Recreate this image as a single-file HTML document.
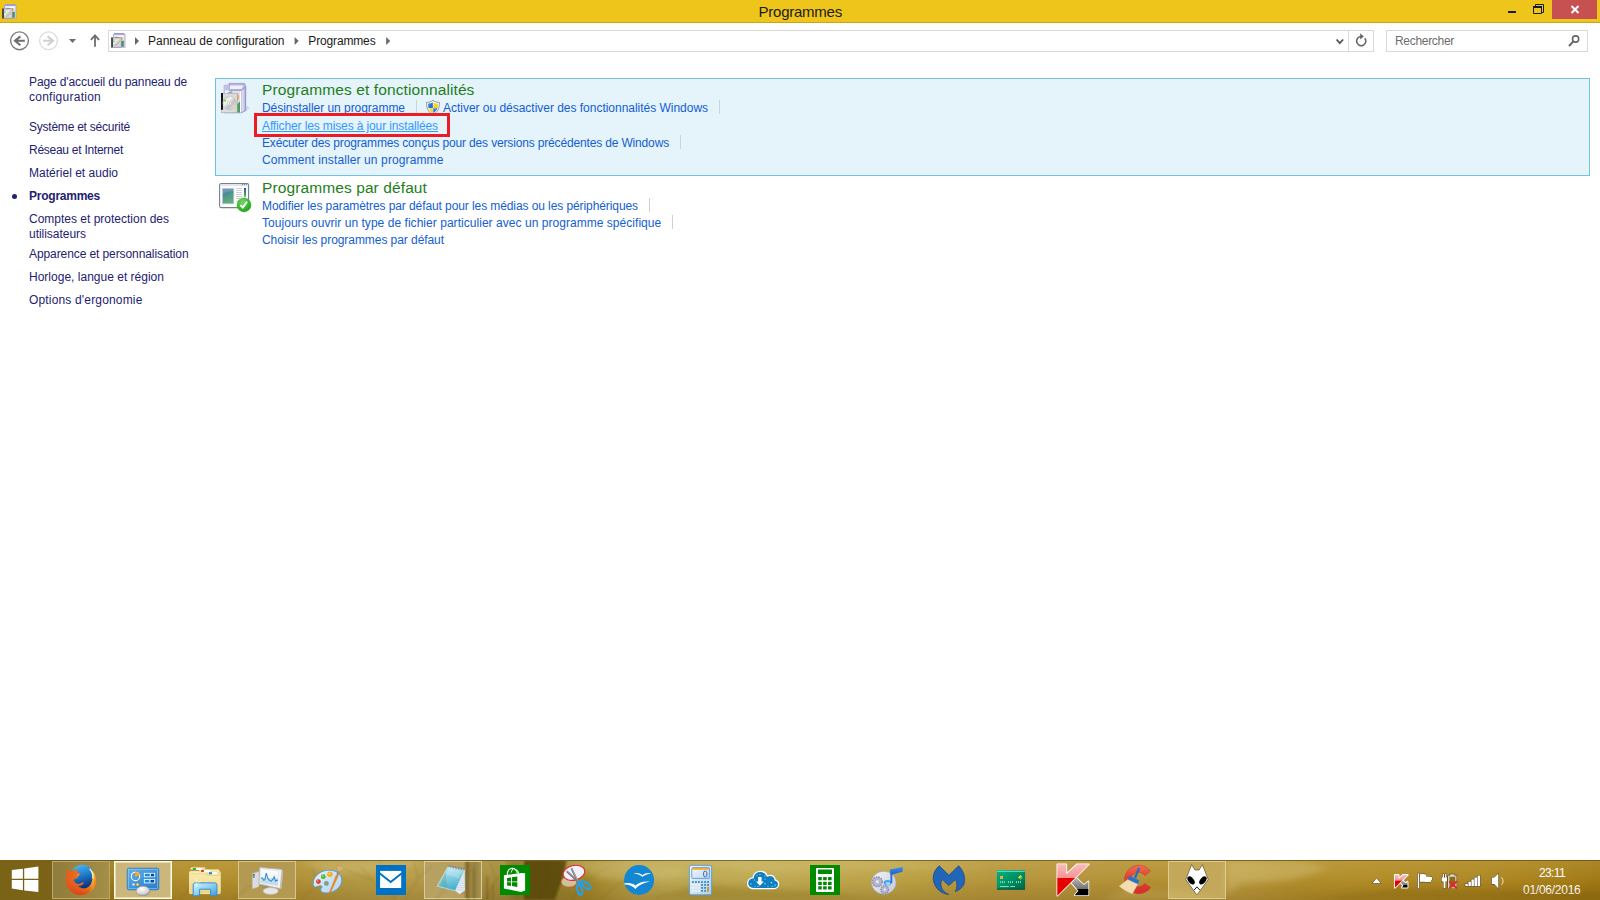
<!DOCTYPE html>
<html lang="fr"><head><meta charset="utf-8"><title>Programmes</title>
<style>
html,body{margin:0;padding:0;}
body{width:1600px;height:900px;overflow:hidden;background:#fff;position:relative;font-family:"Liberation Sans",sans-serif;}
.t{position:absolute;white-space:nowrap;line-height:20px;height:20px;}
.a{position:absolute;}
svg{position:absolute;overflow:visible;}
</style></head><body>

<!-- title bar -->
<div class="a" style="left:0;top:0;width:1600px;height:22px;background:#eec51b;"></div>
<div class="a" style="left:0;top:22px;width:1600px;height:1px;background:#c9a616;"></div>
<div class="a" style="left:1552px;top:0;width:45px;height:19px;background:#c75050;"></div>
<svg style="left:0;top:0" width="1600" height="60" viewBox="0 0 1600 60">
 <!-- window controls -->
 <rect x="1508" y="11" width="8" height="2" fill="#1a1a30"/>
 <path d="M1535.5 6V4.5h8v8H1542" fill="none" stroke="#1a1a30" stroke-width="1"/>
 <path d="M1533.5 7h8v6.5h-8z" fill="none" stroke="#1a1a30" stroke-width="1"/>
 <rect x="1533" y="6" width="9" height="2" fill="#1a1a30"/>
 <path d="M1571.5 6l7 7M1578.5 6l-7 7" stroke="#fff" stroke-width="1.9" fill="none"/>
 <!-- back -->
 <circle cx="19.5" cy="40.8" r="8.9" fill="none" stroke="#7c7c7c" stroke-width="1.4"/>
 <path d="M24.8 40.8H15.2M20.4 36.4L15 40.8l5.4 4.4" fill="none" stroke="#6e6e6e" stroke-width="2.1" stroke-linejoin="miter"/>
 <!-- forward -->
 <circle cx="48.5" cy="40.8" r="8.9" fill="none" stroke="#dcdcdc" stroke-width="1.3"/>
 <path d="M43.2 40.8h9.6M47.6 36.4l5.4 4.4-5.4 4.4" fill="none" stroke="#cfcfcf" stroke-width="2.1"/>
 <!-- dropdown -->
 <path d="M69 39h7l-3.5 4z" fill="#6d6d6d"/>
 <!-- up -->
 <path d="M95 46.8V36M90.9 39.8L95 35.4l4.1 4.4" fill="none" stroke="#6e6e6e" stroke-width="1.8"/>
 <!-- breadcrumb triangles -->
 <path d="M135 37l4 4-4 4z" fill="#666"/>
 <path d="M294.6 37l4 4-4 4z" fill="#666"/>
 <path d="M386.2 37l4 4-4 4z" fill="#666"/>
 <!-- chevron -->
 <path d="M1336.5 39.5l3.3 3.6 3.3-3.6" fill="none" stroke="#555" stroke-width="1.8"/>
 <!-- refresh -->
 <path d="M1364.8 38.2a4.6 4.6 0 1 1-3.6-1.7" fill="none" stroke="#666" stroke-width="1.6"/>
 <path d="M1360.2 33.2l3.6 3.2-3.6 3z" fill="#666"/>
 <!-- magnifier -->
 <circle cx="1575.6" cy="39" r="3.1" fill="none" stroke="#666" stroke-width="1.6"/>
 <path d="M1573.4 41.4l-4.4 4.6" stroke="#666" stroke-width="2" fill="none"/>
</svg>
<!-- address bar -->
<div class="a" style="left:108px;top:30px;width:1264px;height:20px;border:1px solid #d9d9d9;"></div>
<div class="a" style="left:1348px;top:31px;width:1px;height:20px;background:#d9d9d9;"></div>
<div class="a" style="left:1386px;top:30px;width:200px;height:20px;border:1px solid #d9d9d9;"></div>

<!-- selection -->
<div class="a" style="left:215px;top:78px;width:1373px;height:96px;border:1px solid #70c0e7;background:#e5f3fb;z-index:-1;"></div>
<!-- red highlight -->
<div class="a" style="left:254px;top:113px;width:190px;height:18px;border:3px solid #ed1c24;z-index:5;"></div>
<!-- separators -->
<div class="a" style="left:416px;top:100px;width:1px;height:14px;background:#c9d4db;"></div>
<div class="a" style="left:719px;top:100px;width:1px;height:14px;background:#c9d4db;"></div>
<div class="a" style="left:680px;top:135px;width:1px;height:14px;background:#c9d4db;"></div>
<div class="a" style="left:649px;top:198px;width:1px;height:14px;background:#d0d0d0;"></div>
<div class="a" style="left:672px;top:215px;width:1px;height:14px;background:#d0d0d0;"></div>
<!-- bullet -->
<div class="a" style="left:12px;top:194px;width:5px;height:5px;border-radius:50%;background:#1e2270;"></div>

<!-- taskbar -->
<div class="a" id="tb" style="left:0;top:860px;width:1600px;height:40px;background:linear-gradient(90deg,#8a6e16 0,#8d7118 3.2%,#9a7a1a 7%,#ae8a28 11%,#b08c2a 14%,#ae8c30 18%,#b0953e 21%,#b59a46 24%,#b39846 26%,#a88e40 29%,#a0883a 31.5%,#9a8234 32.8%,#98802e 35.2%,#a08428 36.8%,#ac9038 38.2%,#b39a44 39.5%,#bba650 42%,#bea850 47%,#bda44a 52%,#b99d40 57%,#b4943a 62%,#b39238 68%,#b28e2e 74%,#b6943a 77.5%,#b08c2a 81%,#b08a24 86%,#ac8620 92%,#a67e18 97%,#9e7612 100%);"></div>
<div class="a" style="left:52px;top:860px;width:1548px;height:40px;background:linear-gradient(180deg,rgba(255,244,190,.13) 0,rgba(255,244,190,.05) 40%,rgba(60,36,0,.02) 60%,rgba(60,36,0,.14) 100%);"></div>
<div class="a" style="left:0;top:860px;width:1600px;height:1px;background:rgba(70,52,8,.55);"></div>
<div class="a" style="left:0;top:860px;width:52px;height:40px;background:#7a6217;"></div>
<!-- running app buttons -->
<div class="a" style="left:52px;top:861px;width:56px;height:36px;border:1px solid #b9a872;background:linear-gradient(90deg,#8f7c3a,#a48e48);"></div>
<div class="a" style="left:114px;top:861px;width:54px;height:34px;border:1px solid #fffdf2;box-shadow:inset 0 0 0 1px #e6dab0;background:#cbb67c;width:56px;height:36px;"></div>
<div class="a" style="left:238px;top:861px;width:56px;height:36px;border:1px solid #d6c690;background:#b39a50;"></div>
<div class="a" style="left:424px;top:861px;width:56px;height:36px;border:1px solid #d8cb9c;background:linear-gradient(90deg,#b8a262 0,#b7a160 68%,#8f7a36 74%,#a08a48 80%,#948040 88%,#a8924e 100%);"></div>
<div class="a" style="left:1168px;top:861px;width:56px;height:36px;border:1px solid #dccb94;background:#c3a85a;"></div>

<div class="t" style="left:758.5px;top:1.5px;font-size:15px;color:#1c1c1c;font-weight:400;letter-spacing:-0.236px;">Programmes</div>
<div class="t" style="left:148px;top:31.0px;font-size:12px;color:#1a1a1a;font-weight:400;letter-spacing:-0.012px;">Panneau de configuration</div>
<div class="t" style="left:308.3px;top:31.0px;font-size:12px;color:#1a1a1a;font-weight:400;letter-spacing:-0.149px;">Programmes</div>
<div class="t" style="left:1395px;top:31.0px;font-size:12px;color:#6d6d6d;font-weight:400;letter-spacing:-0.303px;">Rechercher</div>
<div class="t" style="left:29px;top:72.0px;font-size:12px;color:#1e2270;font-weight:400;letter-spacing:-0.110px;">Page d&#x27;accueil du panneau de</div>
<div class="t" style="left:29px;top:87.0px;font-size:12px;color:#1e2270;font-weight:400;letter-spacing:0.252px;">configuration</div>
<div class="t" style="left:29px;top:117.0px;font-size:12px;color:#1e2270;font-weight:400;letter-spacing:-0.230px;">Système et sécurité</div>
<div class="t" style="left:29px;top:140.0px;font-size:12px;color:#1e2270;font-weight:400;letter-spacing:-0.263px;">Réseau et Internet</div>
<div class="t" style="left:29px;top:163.0px;font-size:12px;color:#1e2270;font-weight:400;letter-spacing:0.017px;">Matériel et audio</div>
<div class="t" style="left:29px;top:186.0px;font-size:12px;color:#1e2270;font-weight:700;letter-spacing:-0.237px;">Programmes</div>
<div class="t" style="left:29px;top:209.0px;font-size:12px;color:#1e2270;font-weight:400;letter-spacing:-0.003px;">Comptes et protection des</div>
<div class="t" style="left:29px;top:224.0px;font-size:12px;color:#1e2270;font-weight:400;letter-spacing:-0.030px;">utilisateurs</div>
<div class="t" style="left:29px;top:244.0px;font-size:12px;color:#1e2270;font-weight:400;letter-spacing:-0.091px;">Apparence et personnalisation</div>
<div class="t" style="left:29px;top:267.0px;font-size:12px;color:#1e2270;font-weight:400;letter-spacing:0.009px;">Horloge, langue et région</div>
<div class="t" style="left:29px;top:290.0px;font-size:12px;color:#1e2270;font-weight:400;letter-spacing:0.165px;">Options d&#x27;ergonomie</div>
<div class="t" style="left:262px;top:79.5px;font-size:15.5px;color:#1e7e20;font-weight:400;letter-spacing:0.108px;">Programmes et fonctionnalités</div>
<div class="t" style="left:262px;top:177.5px;font-size:15.5px;color:#1e7e20;font-weight:400;letter-spacing:0.103px;">Programmes par défaut</div>
<div class="t" style="left:262px;top:98.0px;font-size:12px;color:#1360d2;font-weight:400;letter-spacing:-0.043px;">Désinstaller un programme</div>
<div class="t" style="left:443px;top:98.0px;font-size:12px;color:#1360d2;font-weight:400;letter-spacing:-0.023px;">Activer ou désactiver des fonctionnalités Windows</div>
<div class="t" style="left:262px;top:116.0px;font-size:12px;color:#3399ff;font-weight:400;letter-spacing:-0.126px;text-decoration:underline;">Afficher les mises à jour installées</div>
<div class="t" style="left:262px;top:133.0px;font-size:12px;color:#1360d2;font-weight:400;letter-spacing:-0.158px;">Exécuter des programmes conçus pour des versions précédentes de Windows</div>
<div class="t" style="left:262px;top:150.0px;font-size:12px;color:#1360d2;font-weight:400;letter-spacing:0.114px;">Comment installer un programme</div>
<div class="t" style="left:262px;top:196.0px;font-size:12px;color:#1360d2;font-weight:400;letter-spacing:-0.087px;">Modifier les paramètres par défaut pour les médias ou les périphériques</div>
<div class="t" style="left:262px;top:213.0px;font-size:12px;color:#1360d2;font-weight:400;letter-spacing:0.041px;">Toujours ouvrir un type de fichier particulier avec un programme spécifique</div>
<div class="t" style="left:262px;top:230.0px;font-size:12px;color:#1360d2;font-weight:400;letter-spacing:-0.063px;">Choisir les programmes par défaut</div>
<div class="t" style="left:1539px;top:863.0px;font-size:12px;color:#ffffff;font-weight:400;letter-spacing:-0.628px;">23:11</div>
<div class="t" style="left:1523px;top:880.0px;font-size:12px;color:#ffffff;font-weight:400;letter-spacing:-0.256px;">01/06/2016</div>
<svg style="left:0;top:860px" width="1600" height="40" viewBox="0 860 1600 40">
<defs><clipPath id="tbc"><rect x="52" y="861" width="1548" height="39"/></clipPath>
<filter id="tbl" x="-5%" y="-50%" width="110%" height="200%"><feGaussianBlur stdDeviation="1.2"/></filter>
<filter id="tbl2" x="-5%" y="-50%" width="110%" height="200%"><feGaussianBlur stdDeviation="3"/></filter></defs>
<g clip-path="url(#tbc)">
 <path d="M524 860L567 860L562 880L555 900L524 900z" fill="#5f4e10" filter="url(#tbl)"/>
 <path d="M506 860L524 860L524 900L512 900z" fill="#5f4e10" opacity=".35" filter="url(#tbl2)"/>
 <g fill="none" stroke="#5a4408" stroke-width="1" opacity=".22" filter="url(#tbl)">
  <path d="M396 900L372 880L346 870M372 880L360 866M396 900L388 876L380 862M388 876L400 864M405 900L418 878L414 862M418 878L432 866"/>
  <path d="M436 900L452 880L476 868M452 880L448 864M486 900L496 880L490 862M496 880L512 866M300 900L318 884L344 878M318 884L312 868"/>
  <path d="M540 900L548 876L544 862M572 900L586 880L610 866M586 880L580 864M600 900L618 884L640 876"/>
  <path d="M232 900L250 886L280 880M180 900L196 880L190 866"/>
 </g>
 <g fill="none" stroke="#4c3a06" opacity=".3" filter="url(#tbl)">
  <path d="M468 862V900" stroke-width="3"/><path d="M474 870V900" stroke-width="1.5"/>
  <path d="M487 876V900" stroke-width="2"/><path d="M493 884V900" stroke-width="1.2"/>
 </g>
 <g filter="url(#tbl2)">
  <path d="M560 860L640 860L700 872L660 880L600 878z" fill="#d8c880" opacity=".35"/>
  <path d="M660 861L900 861L1000 868L760 872z" fill="#d8c880" opacity=".25"/>
  <path d="M640 900L700 884L820 892L900 900z" fill="#7a5c08" opacity=".25"/>
  <path d="M1226 861L1300 861L1330 868L1290 880L1240 884L1226 896z" fill="#e0d090" opacity=".32"/>
  <path d="M1100 900L1130 888L1200 894L1226 900z" fill="#e0d090" opacity=".2"/>
  <path d="M300 861L420 861L400 872L330 874z" fill="#e0d090" opacity=".28"/>
  <path d="M1300 900L1400 888L1600 892L1600 900z" fill="#6a4c04" opacity=".22"/>
 </g>
</g>
</svg>

<svg style="left:0;top:860px" width="1600" height="40" viewBox="0 860 1600 40">
<defs>
 <linearGradient id="ffb" x1="0" y1="0" x2="0.3" y2="1"><stop offset="0" stop-color="#58c0f4"/><stop offset=".5" stop-color="#1f7fd0"/><stop offset="1" stop-color="#0c2f80"/></linearGradient>
 <linearGradient id="ffo" x1="0" y1="0" x2="1" y2="0"><stop offset="0" stop-color="#e4551c"/><stop offset=".45" stop-color="#ec7220"/><stop offset=".75" stop-color="#f4a01c"/><stop offset=".9" stop-color="#ffde2a"/><stop offset="1" stop-color="#f28c1c"/></linearGradient>
 <linearGradient id="ffo2" x1="0" y1="0" x2="0" y2="1"><stop offset="0" stop-color="#f08a24" stop-opacity="0"/><stop offset="1" stop-color="#d43414" stop-opacity=".75"/></linearGradient>
 <linearGradient id="cpb" x1="0" y1="0" x2="1" y2="1"><stop offset="0" stop-color="#62b2ea"/><stop offset=".6" stop-color="#3c90d8"/><stop offset="1" stop-color="#2a78c8"/></linearGradient>
 <radialGradient id="cps" cx=".4" cy=".3" r=".8"><stop offset="0" stop-color="#ffffff"/><stop offset=".6" stop-color="#d8d8d8"/><stop offset="1" stop-color="#8c8c8c"/></radialGradient>
 <linearGradient id="exs" x1="0" y1="0" x2="1" y2="1"><stop offset="0" stop-color="#d8f2fc"/><stop offset=".5" stop-color="#8ed0f0"/><stop offset="1" stop-color="#3e9ada"/></linearGradient>
 <linearGradient id="exf" x1="0" y1="0" x2="0" y2="1"><stop offset="0" stop-color="#faeeb4"/><stop offset="1" stop-color="#f0d479"/></linearGradient>
 <linearGradient id="pms" x1="0" y1="0" x2="0" y2="1"><stop offset="0" stop-color="#ffffff"/><stop offset=".55" stop-color="#eef6fc"/><stop offset=".56" stop-color="#c6e2f4"/><stop offset="1" stop-color="#b8daf0"/></linearGradient>
</defs>
<!-- windows logo -->
<g fill="#fff">
 <path d="M11.8 870.1L22.9 868.7V878.8H11.8z"/><path d="M24.2 868.5L38.4 866.6V878.8H24.2z"/>
 <path d="M11.8 880.1H22.9V890.2L11.8 888.6z"/><path d="M24.2 880.1H38.4V892.1L24.2 890.4z"/>
</g>
<!-- firefox -->
<g>
 <circle cx="82.2" cy="877.2" r="12.4" fill="url(#ffb)"/>
 <path d="M68.2 868.2C68.6 869.6 69.4 870.6 70.5 871C72 870.2 73.6 870 75 870.3C75.6 869.6 76.6 869.1 77.6 869.1C77 870.2 76.9 871.2 77.2 872.1C78.4 872.6 79.6 873.4 80.5 874.3C79.8 875.2 78.9 875.7 78 875.9C78.2 876.8 77.9 877.6 77.4 878.2C76 878.3 74.4 878.9 73.5 880C74.4 882.6 76.4 884 78.4 884C80.6 884 82.2 882.2 84 882.3C83.4 883.6 82.4 884.6 81.2 885.2C80.2 885.7 79 886 77.9 886.1C79.8 888 82.6 888.8 85 888.4C87.8 887.9 90.4 885.6 91.6 882.4C92.6 879.6 92.9 876.8 92.5 874C92.1 872.2 91.2 870.6 90 869.4C92.4 870.4 94.2 872.4 95.2 875C96.4 878 96.4 881.6 95.4 884.8C94 889.2 90.4 892.8 85.8 894.4C81.2 895.9 76.2 895.2 72.2 892.4C68.6 889.8 66.4 885.8 65.9 881.4C65.6 878 66.2 874.4 67 871.6C67.4 870.4 67.8 869.2 68.2 868.2Z" fill="url(#ffo)"/>
 <path d="M68.2 868.2C68.6 869.6 69.4 870.6 70.5 871C72 870.2 73.6 870 75 870.3C75.6 869.6 76.6 869.1 77.6 869.1C77 870.2 76.9 871.2 77.2 872.1C78.4 872.6 79.6 873.4 80.5 874.3C79.8 875.2 78.9 875.7 78 875.9C78.2 876.8 77.9 877.6 77.4 878.2C76 878.3 74.4 878.9 73.5 880C74.4 882.6 76.4 884 78.4 884C80.6 884 82.2 882.2 84 882.3C83.4 883.6 82.4 884.6 81.2 885.2C80.2 885.7 79 886 77.9 886.1C79.8 888 82.6 888.8 85 888.4C87.8 887.9 90.4 885.6 91.6 882.4C92.6 879.6 92.9 876.8 92.5 874C92.1 872.2 91.2 870.6 90 869.4C92.4 870.4 94.2 872.4 95.2 875C96.4 878 96.4 881.6 95.4 884.8C94 889.2 90.4 892.8 85.8 894.4C81.2 895.9 76.2 895.2 72.2 892.4C68.6 889.8 66.4 885.8 65.9 881.4C65.6 878 66.2 874.4 67 871.6C67.4 870.4 67.8 869.2 68.2 868.2Z" fill="url(#ffo2)"/>
 <path d="M89.6 868.8C92 871.2 93.2 874.6 92.8 878.6" fill="none" stroke="#fffbe0" stroke-width="1.3" opacity=".85"/>
 <path d="M77.2 874.6L78.8 874.9L77.6 875.6z" fill="#fff" opacity=".8"/>
</g>
<!-- control panel -->
<g>
 <rect x="127.2" y="868.2" width="31.6" height="21.6" rx="1.6" fill="url(#cpb)" stroke="#2d7cc6" stroke-width=".8"/>
 <rect x="128.4" y="869.4" width="29.2" height="19.2" fill="none" stroke="#9ad0f4" stroke-width=".7" opacity=".8"/>
 <circle cx="135.5" cy="876.4" r="4.2" fill="none" stroke="#fff" stroke-width="1.1"/>
 <path d="M135.1 871.1L141 874.4L135.1 877z" fill="#ffa41c"/>
 <rect x="144.3" y="873.3" width="10.4" height="3.5" fill="#1a8ad8" stroke="#fff" stroke-width=".8"/><rect x="150.6" y="873.9" width="3.4" height="2.3" fill="#0a46a4"/><rect x="149.8" y="873.6" width="1" height="2.9" fill="#fff"/>
 <rect x="144.3" y="879.4" width="10.4" height="3.5" fill="#1a8ad8" stroke="#fff" stroke-width=".8"/><rect x="150.2" y="880" width="3.8" height="2.3" fill="#0a46a4"/><rect x="149.4" y="879.7" width="1" height="2.9" fill="#fff"/>
 <circle cx="133.5" cy="884.5" r="1.3" fill="#aee8ff"/><circle cx="133.5" cy="884.5" r=".6" fill="#fff"/>
 <circle cx="137.5" cy="884.5" r="1.6" fill="#ffa41c"/><circle cx="137.5" cy="884.5" r=".7" fill="#fff"/>
 <path d="M136.2 891.6C136.2 888.4 139 886.2 143 886.2C147 886.2 149.8 888.4 149.8 891.6C149.8 894.2 147 895.6 143 895.6C139 895.6 136.2 894.2 136.2 891.6Z" fill="url(#cps)" stroke="#8a8a8a" stroke-width=".5"/>
</g>
<!-- explorer -->
<g>
 <path d="M190.3 869.2L191.2 867.4H204.6L205.3 869.2z" fill="#f6e6a6" stroke="#e9d48c" stroke-width=".6"/>
 <path d="M199 871.6L200 869.6H218.6L219.4 871.6z" fill="#f6e6a6" stroke="#e9d48c" stroke-width=".6"/>
 <rect x="189.6" y="871.4" width="30.6" height="22.2" rx=".8" fill="url(#exf)" stroke="#f6ecc4" stroke-width=".9"/>
 <path d="M206.6 874.8L207.8 872.2H219.6V874.8z" fill="#f6e6a6" stroke="#e4cc7c" stroke-width=".5"/>
 <path d="M190.4 873.8H206.4L207.6 875.4H219.8" fill="none" stroke="#e8d084" stroke-width=".7"/>
 <rect x="192.9" y="868" width="3.2" height="1.9" fill="#16c030"/><rect x="196.1" y="868" width="6" height="1.9" fill="#fff"/>
 <rect x="201.1" y="870" width="2.8" height="1.9" fill="#d83020"/><rect x="203.9" y="870" width="6" height="1.9" fill="#fff"/>
 <rect x="209" y="872.2" width="3" height="2" fill="#1c86e8"/><rect x="212" y="872.2" width="5" height="2" fill="#fff"/>
 <path d="M193.2 895.8V884.8C193.2 883.6 194 882.9 195.2 882.9H214.8C216 882.9 216.9 883.6 216.9 884.8V895.8H210.6V889.2H199.6V895.8Z" fill="url(#exs)" stroke="#2e90d8" stroke-width="1"/>
 <path d="M196.4 877.6V887M196.6 884.6L201.6 880" stroke="#fff" stroke-width=".6" opacity=".8"/>
</g>
<!-- perfmon -->
<g>
 <ellipse cx="270.7" cy="891" rx="7.6" ry="3.4" fill="#e6e6e6" stroke="#b4b4b4" stroke-width=".5"/>
 <path d="M252.3 873.4L259 871.6V886.4L253 888.8L252.3 888z" fill="#dcdce0" stroke="#b8b8c0" stroke-width=".5"/>
 <rect x="252.8" y="874" width="1.8" height="3.6" fill="#6a3ea8"/><rect x="252.9" y="875.2" width="1.7" height="1.8" fill="#40e020"/>
 <path d="M281.4 870.6L283 871L281.4 888.2L280 888.8z" fill="#d0d0d0" stroke="#b0b0b0" stroke-width=".4"/><path d="M259.8 867.4L282 869.5L280.2 888.6L259 883.9z" fill="#f2f2f2" stroke="#b8b8b8" stroke-width=".8"/>
 <path d="M261 869L278.4 870.9L277.6 885.4L260.6 882.6z" fill="url(#pms)" stroke="#d0d4d8" stroke-width=".4"/>
 <path d="M261 878.2L262.4 877.8L263.6 880.2L264.8 879.8L266.3 873.2L267.6 878L269.6 880.6L271.2 881.2L272.8 879.4L274.2 876.8L275.4 881.2L276.8 880.2L277.8 880.6" fill="none" stroke="#3a8cc8" stroke-width="1.1"/>
 <path d="M262 887.2L266.4 886.2M263 888.2L267.6 887.2" stroke="#888" stroke-width=".6"/>
</g>
</svg>

<svg style="left:0;top:860px" width="1600" height="40" viewBox="0 860 1600 40">
<defs>
 <linearGradient id="ptp" x1="0" y1="0" x2="1" y2="1"><stop offset="0" stop-color="#e2f0fa"/><stop offset="1" stop-color="#b4d6ee"/></linearGradient>
 <linearGradient id="ntc" x1="0" y1="0" x2=".3" y2="1"><stop offset="0" stop-color="#d2ecf4"/><stop offset=".5" stop-color="#8cd0e2"/><stop offset="1" stop-color="#46b0ce"/></linearGradient>
 <linearGradient id="clb" x1="0" y1="0" x2="1" y2="1"><stop offset="0" stop-color="#f0f8fe"/><stop offset="1" stop-color="#a8d2f2"/></linearGradient>
 <linearGradient id="cld" x1="0" y1="0" x2="1" y2="1"><stop offset="0" stop-color="#f2faff"/><stop offset="1" stop-color="#b6d8f4"/></linearGradient>
</defs>
<!-- paint -->
<g>
 <path d="M313.2 884.4C312.6 878 318.6 871 327.6 870.2C336 869.6 342 874.4 341.8 880.6C341.4 887.6 334 893 326.4 893C322.6 893 320.6 891.6 320.6 889.8C320.6 888.4 322.2 887.8 322 886.6C321.6 885.2 319.4 885.6 317.4 886.6C315.4 887.6 313.4 886.8 313.2 884.4Z" fill="url(#ptp)" stroke="#4c9cd6" stroke-width=".9"/>
 <circle cx="326.4" cy="883.4" r="2" fill="#b59a46" stroke="#4c9cd6" stroke-width=".9"/>
 <circle cx="318.4" cy="881.6" r="2.4" fill="#e8382c"/><circle cx="317.8" cy="881" r=".8" fill="#f8a098"/>
 <circle cx="323.3" cy="876.7" r="2.4" fill="#4cb82c"/><circle cx="322.9" cy="876.1" r=".8" fill="#b4e89c"/>
 <circle cx="329.9" cy="874.3" r="2.7" fill="#ffa818"/><circle cx="329.5" cy="873.7" r=".9" fill="#ffe0a0"/>
 <path d="M328.2 895.6L336.2 875.2L338.2 876L329 895.8z" fill="#f08820" stroke="#d86c10" stroke-width=".4"/>
 <path d="M336.2 875.2L337.8 871L339.8 871.8L338.2 876z" fill="#909090"/>
 <path d="M337.8 871C336.4 868.6 336.6 866.6 337.4 865.2C340 865.6 343.2 867.2 344.4 869C342.8 869.6 341.2 870.4 339.8 871.8z" fill="#d8b070" stroke="#b08850" stroke-width=".4"/>
</g>
<!-- mail -->
<g>
 <rect x="376" y="865" width="30" height="30" fill="#0072c6"/>
 <rect x="380.1" y="870.9" width="21.1" height="17.1" fill="#fff"/>
 <path d="M379.6 873.2L390.7 882L401.8 873.2" fill="none" stroke="#0072c6" stroke-width="1.9"/>
</g>
<!-- notepad -->
<g>
 <path d="M465.4 871L466.6 889.4L461 894.4L459.8 894z" fill="#6a5414" opacity=".45"/>
 <path d="M464.8 869.8L465 890.6L459.8 894.2L455 890.6z" fill="#e6ecf4" stroke="#bcc6d2" stroke-width=".5"/>
 <path d="M463.6 874.4L464.9 874.6M462.7 876.6L464.9 876.8M461.8 878.8L464.9 879M460.8 881L464.9 881.2M459.8 883.2L464.9 883.4M458.8 885.4L464.9 885.6M457.8 887.6L464.9 887.8M456.8 889.8L464.9 890" stroke="#b4c4d6" stroke-width=".5"/>
 <path d="M448.2 866.4L464.8 869.8L455.3 890.8L437.2 886.2z" fill="url(#ntc)" stroke="#d6eef6" stroke-width=".6"/>
 <path d="M448.6 866.2L464.8 869.4" stroke="#6c747c" stroke-width="1.7" stroke-dasharray=".9 .7"/>
 <path d="M445.4 872L440 885.6L447 887.4z" fill="#5c9c86" opacity=".35"/>
 <path d="M449 868.4L462 871L458 879C454 876 450 874.6 446.4 874.4z" fill="#fff" opacity=".22"/>
</g>
<!-- store -->
<g>
 <rect x="500" y="865" width="30" height="30" fill="#008a00"/>
 <path d="M503.9 875.2L521 873L525.1 873.2V890.6L521 892L503.9 888.4z" fill="#fff"/>
 <path d="M507.4 875C507 870.6 509.8 868 512.6 868.4C515.4 868.8 517 871 517.4 873.4" fill="none" stroke="#fff" stroke-width="1.1"/>
 <path d="M511 872.6L512.8 868.8M516.6 869.4C517.8 870.4 518.4 871.8 518.6 873" fill="none" stroke="#fff" stroke-width=".9"/>
 <path d="M507 878L511.1 877.4V881.4H507zM512 877.3L517.3 876.6V881.4H512zM507 882.2H511.1V886L507 885.4zM512 882.2H517.3V886.9L512 886.1z" fill="#008a00"/>
</g>
<!-- snipping tool -->
<g>
 <ellipse cx="569" cy="881.8" rx="7.8" ry="5.2" fill="#d4caa4" stroke="#e05040" stroke-width=".6" opacity=".9"/>
 <ellipse cx="574" cy="872.8" rx="11" ry="7.3" transform="rotate(-14 574 872.8)" fill="#f2f0fa" stroke="#e8282c" stroke-width="1.1"/>
 <path d="M566.8 871.2L578.4 882" stroke="#74747c" stroke-width="2"/><path d="M567.2 871L578.6 881.6" stroke="#d8d8e0" stroke-width=".5"/>
 <path d="M571.4 868.4L577.8 881.6" stroke="#74747c" stroke-width="2"/><path d="M571.8 868.6L578 881.2" stroke="#d8d8e0" stroke-width=".5"/>
 <ellipse cx="579.6" cy="889.8" rx="2.3" ry="5" transform="rotate(-14 579.6 889.8)" fill="none" stroke="#2a9ee0" stroke-width="2.3"/>
 <ellipse cx="586" cy="885.2" rx="5.2" ry="2.4" transform="rotate(38 586 885.2)" fill="none" stroke="#2a9ee0" stroke-width="2.3"/>
 <path d="M577.6 881.4L579 884.6M578.6 881L581.8 882.6" stroke="#2a9ee0" stroke-width="2.4"/>
</g>
<!-- openoffice -->
<g>
 <circle cx="639.1" cy="880" r="15" fill="#1487d2"/>
 <path d="M633.6 873.4C637.4 872.4 640.6 873.6 642.5 875.2C644.6 873.4 648 872.4 650.9 873.4C647.4 873.8 644.4 875 642.4 876.8C640.2 874.8 637.2 873.6 633.6 873.4Z" fill="#fff"/>
 <path d="M624.3 883.4C629 882.2 633 883.4 635.6 885.6C639 882.4 644.4 880.8 650.2 881.8C644.8 882.4 639.2 884.6 635.3 889C632.6 886 628.6 884.4 624.6 884.6Z" fill="#fff"/>
</g>
<!-- calculator -->
<g>
 <rect x="689.4" y="865.4" width="22.2" height="29.4" rx="1.8" fill="url(#clb)" stroke="#5a9cd8" stroke-width=".9"/>
 <rect x="691.8" y="867.6" width="17.6" height="10.8" rx=".8" fill="url(#cld)" stroke="#5a8cc0" stroke-width=".8"/>
 <rect x="692.2" y="868" width="16.8" height="1.8" fill="#ffa626"/>
 <rect x="703.6" y="871.2" width="3.2" height="5.6" rx="1.4" fill="none" stroke="#3c5a9c" stroke-width=".9"/>
 <g fill="#3f8fb8">
  <rect x="692" y="881.1" width="1.9" height="1.8"/><rect x="695" y="881.1" width="1.9" height="1.8"/><rect x="698" y="881.1" width="1.9" height="1.8"/><rect x="701.1" y="881.1" width="1.9" height="1.8"/><rect x="704.1" y="881.1" width="1.9" height="1.8"/><rect x="707.1" y="881.1" width="1.9" height="1.8"/>
  <rect x="701.1" y="884" width="1.9" height="1.8"/><rect x="704.1" y="884" width="1.9" height="1.8"/><rect x="707.1" y="884" width="1.9" height="1.8"/>
  <rect x="701.1" y="887" width="1.9" height="1.8"/><rect x="704.1" y="887" width="1.9" height="1.8"/>
  <rect x="701.1" y="890" width="1.9" height="1.8"/><rect x="704.1" y="890" width="1.9" height="1.8"/>
 </g>
 <g fill="#fdf0ea">
  <rect x="692" y="884" width="1.9" height="1.8"/><rect x="695" y="884" width="1.9" height="1.8"/><rect x="698" y="884" width="1.9" height="1.8"/>
  <rect x="692" y="887" width="1.9" height="1.8"/><rect x="695" y="887" width="1.9" height="1.8"/><rect x="698" y="887" width="1.9" height="1.8"/>
  <rect x="692" y="890" width="1.9" height="1.8"/><rect x="695" y="890" width="1.9" height="1.8"/><rect x="698" y="890" width="1.9" height="1.8"/>
 </g>
 <rect x="707.1" y="887" width="1.9" height="4.8" fill="#f08a18"/>
</g>
</svg>

<svg style="left:0;top:860px" width="1600" height="40" viewBox="0 860 1600 40">
<defs>
 <linearGradient id="cdg" x1="0" y1="0" x2="1" y2="1"><stop offset="0" stop-color="#f4f4fa"/><stop offset=".5" stop-color="#dcdfe8"/><stop offset="1" stop-color="#c4c8d6"/></linearGradient>
 <linearGradient id="mng" x1="0" y1="0" x2="0" y2="1"><stop offset="0" stop-color="#3f8cf0"/><stop offset="1" stop-color="#1a62d0"/></linearGradient>
 <linearGradient id="crd" x1="0" y1="0" x2="1" y2="1"><stop offset="0" stop-color="#00b484"/><stop offset=".45" stop-color="#00946a"/><stop offset="1" stop-color="#006446"/></linearGradient>
 <linearGradient id="kpk" x1="0" y1="0" x2="0" y2="1"><stop offset="0" stop-color="#fabcbc"/><stop offset="1" stop-color="#f05c5c"/></linearGradient>
 <linearGradient id="kgr" x1="0" y1="0" x2="0" y2="1"><stop offset="0" stop-color="#b8b8b8"/><stop offset="1" stop-color="#484848"/></linearGradient>
 <linearGradient id="ccr" x1="0" y1="0" x2="0" y2="1"><stop offset="0" stop-color="#f07050"/><stop offset=".4" stop-color="#e04434"/><stop offset="1" stop-color="#d82c2c"/></linearGradient>
 <clipPath id="kc1"><rect x="1050" y="860" width="50" height="18"/></clipPath>
 <clipPath id="kc2"><rect x="1050" y="878" width="50" height="20"/></clipPath>
 <clipPath id="kc3"><rect x="1060" y="870" width="40" height="19"/></clipPath>
 <clipPath id="kc4"><rect x="1060" y="889" width="40" height="10"/></clipPath>
</defs>
<!-- cloud -->
<g>
 <path d="M753.4 888.6C749.8 888.6 747.6 886 747.6 883.2C747.6 880.2 750 877.8 753 877.8C753.6 873.8 756.8 871.4 760.4 871.4C763.6 871.4 766.2 873.2 767.4 876C768.2 875.6 769 875.4 770 875.4C772.8 875.4 774.8 877.4 775.2 880C777.4 880.6 778.6 882.4 778.6 884.2C778.6 886.8 776.6 888.6 774 888.6Z" fill="#0f7ebe" stroke="#fff" stroke-width="1.3"/>
 <g fill="#3ab4ee" opacity=".75"><circle cx="751" cy="884" r="1.2"/><circle cx="755" cy="886.6" r="1"/><circle cx="765" cy="879" r="1"/><circle cx="771.4" cy="882.6" r="1.1"/><circle cx="775" cy="885.2" r="1.2"/><circle cx="768" cy="886.4" r="1"/><circle cx="757" cy="875.6" r="1"/></g>
 <g fill="#d8f2fc" opacity=".85"><circle cx="760" cy="874.6" r=".7"/><circle cx="765" cy="875.8" r=".6"/><circle cx="754.4" cy="880" r=".6"/><circle cx="765" cy="883.8" r=".7"/><circle cx="771.4" cy="882.6" r=".6"/><circle cx="758" cy="886.4" r=".6"/><circle cx="772" cy="886.6" r=".6"/></g>
 <path d="M758.2 877H761.6V881.4H763.8L759.9 885.8L756 881.4H758.2z" fill="#fff"/>
</g>
<!-- green calc -->
<g>
 <rect x="810" y="865" width="30" height="30" fill="#008a00"/>
 <rect x="816" y="868" width="18" height="24" rx="1" fill="#fff"/>
 <rect x="818" y="869.4" width="14" height="4.6" rx=".5" fill="#008a00"/>
 <g fill="#008a00"><rect x="818.2" y="877.1" width="3.6" height="3.2" rx=".5"/><rect x="823.1" y="877.1" width="3.6" height="3.2" rx=".5"/><rect x="828" y="877.1" width="3.6" height="3.2" rx=".5"/>
 <rect x="818.2" y="881.7" width="3.6" height="3.2" rx=".5"/><rect x="823.1" y="881.7" width="3.6" height="3.2" rx=".5"/><rect x="828" y="881.7" width="3.6" height="3.2" rx=".5"/>
 <rect x="818.2" y="886.3" width="3.6" height="3.2" rx=".5"/><rect x="823.1" y="886.3" width="3.6" height="3.2" rx=".5"/><rect x="828" y="886.3" width="3.6" height="3.2" rx=".5"/></g>
</g>
<!-- disc + gears + note -->
<g>
 <ellipse cx="883.8" cy="882.7" rx="12.3" ry="11.5" fill="url(#cdg)" stroke="#a0a2b0" stroke-width=".7"/>
 <circle cx="877.4" cy="881.8" r="4.9" fill="#aaaac4" stroke="#9090aa" stroke-width="1.4" stroke-dasharray="1.5 1.1"/>
 <circle cx="877.4" cy="881.8" r="4" fill="#b4b4cc"/><circle cx="877.4" cy="881.8" r="1.7" fill="#e4e4f0"/>
 <circle cx="884.7" cy="889.6" r="3.9" fill="#aaaac4" stroke="#9090aa" stroke-width="1.3" stroke-dasharray="1.3 1"/>
 <circle cx="884.7" cy="889.6" r="3.1" fill="#b4b4cc"/><circle cx="884.7" cy="889.6" r="1.3" fill="#e4e4f0"/>
 <ellipse cx="887.6" cy="882.8" rx="3.9" ry="2.8" fill="#4aa2f4"/><ellipse cx="888" cy="883.6" rx="2.4" ry="1.4" fill="#a6dcfc"/>
 <rect x="890.4" y="869.6" width="1.9" height="13.6" fill="#2472e0"/>
 <path d="M890.4 869.5L902.7 867.1V871.7L892.3 874.6H890.4z" fill="url(#mng)"/>
</g>
<!-- malwarebytes -->
<path d="M939.3 865.8L948.9 875.3L958.7 865.8C963 870 966.2 878 964 884C962.4 888 958.6 890.6 955.3 891.6C957.2 888 957.6 883 955.3 879.6L948.9 885.6L942.2 879.6C939 885 942 892 948.7 894.4C941 894 935 888 933.5 881C932.2 875 935 869.5 939.3 865.8Z" fill="#2166b8" stroke="#1c3f86" stroke-width=".7"/>
<!-- card -->
<g>
 <rect x="996.9" y="870" width="28.2" height="19.6" rx="1" fill="url(#crd)"/>
 <rect x="997.2" y="870.8" width="27.6" height=".9" fill="#86ecd0"/>
 <rect x="996.9" y="888.6" width="28.2" height="1" fill="#00503a"/>
 <rect x="1000" y="876" width="3" height="3" fill="#f6aa3c"/>
 <path d="M1018 877.2L1020.6 875L1022 876.4L1019.4 878.8z" fill="#e8dc30"/><path d="M1019.6 879L1021.8 877L1022.6 878L1020.6 879.8z" fill="#60d040"/>
 <g fill="#7ce0b4"><rect x="1000.2" y="881" width=".9" height="2.1"/><rect x="1002" y="881" width=".9" height="2.1"/><rect x="1003.8" y="881" width=".9" height="2.1"/>
 <rect x="1008" y="881" width=".9" height="2.1"/><rect x="1010" y="881" width=".9" height="2.1"/><rect x="1012" y="881" width=".9" height="2.1"/>
 <rect x="1016" y="881" width=".9" height="2.1"/><rect x="1018" y="881" width=".9" height="2.1"/><rect x="1020" y="881" width=".9" height="2.1"/>
 <rect x="1000" y="886" width="8.8" height="1"/><rect x="1010.2" y="886" width="4.8" height="1"/></g>
</g>
<!-- kaspersky -->
<g>
 <path d="M1057.3 864.2H1066.4V874.2L1077.1 864.2H1088.9L1057.3 895.8z" fill="#fff" stroke="#fff" stroke-width="1.6" stroke-linejoin="round"/>
 <path d="M1076.2 877.8L1084 885.1L1088.4 881.3V895.3H1074.7L1078.4 890.7L1071.6 883.1z" fill="#fff" stroke="#fff" stroke-width="1.6" stroke-linejoin="round"/>
 <path d="M1057.3 864.2H1066.4V874.2L1077.1 864.2H1088.9L1057.3 895.8z" fill="url(#kpk)" clip-path="url(#kc1)"/>
 <path d="M1057.3 864.2H1066.4V874.2L1077.1 864.2H1088.9L1057.3 895.8z" fill="#e60000" clip-path="url(#kc2)"/>
 <path d="M1076.2 877.8L1084 885.1L1088.4 881.3V895.3H1074.7L1078.4 890.7L1071.6 883.1z" fill="url(#kgr)" clip-path="url(#kc3)"/>
 <path d="M1076.2 877.8L1084 885.1L1088.4 881.3V895.3H1074.7L1078.4 890.7L1071.6 883.1z" fill="#000" clip-path="url(#kc4)"/>
</g>
<!-- ccleaner -->
<g>
 <path d="M1150.4 871.2A14.2 14.2 0 1 0 1150.6 887.4L1144.6 883.6A7.4 7.4 0 1 1 1144.8 875.6Z" fill="url(#ccr)" stroke="#c83028" stroke-width=".5"/>
 <path d="M1138.2 867.6L1140.2 868.2L1136 878.4L1134 877.6z" fill="#1c6ed0"/>
 <path d="M1129.6 876.2L1139.2 880.2L1137.8 884.4L1127.6 879.8z" fill="#1e74d8"/>
 <path d="M1127.6 879.6L1137.8 884.2L1132.4 893.8C1128.4 892.4 1122.8 889.4 1119.1 886.2z" fill="#f4dcac" stroke="#e0c088" stroke-width=".4"/>
</g>
<!-- foobar -->
<g>
 <path d="M1191.6 864.7L1194.9 870H1199.1L1202.4 864.7L1208.2 879.6L1196.9 894.9L1185.8 879.6z" fill="#fff" stroke="#4a3a10" stroke-width=".6" stroke-linejoin="round"/>
 <ellipse cx="1191.1" cy="880.4" rx="4.7" ry="2.7" transform="rotate(50 1191.1 880.4)" fill="#000"/>
 <ellipse cx="1202.9" cy="880.4" rx="4.7" ry="2.7" transform="rotate(-50 1202.9 880.4)" fill="#000"/>
 <path d="M1194 890.2L1196.9 886.9L1200 890.2" fill="none" stroke="#000" stroke-width=".9"/>
</g>
</svg>

<svg style="left:0;top:860px" width="1600" height="40" viewBox="0 860 1600 40">
<defs>
 <linearGradient id="tkp" x1="0" y1="0" x2="0" y2="1"><stop offset="0" stop-color="#fabcbc"/><stop offset="1" stop-color="#f05c5c"/></linearGradient>
 <clipPath id="tk1"><rect x="1390" y="870" width="22" height="11"/></clipPath>
 <clipPath id="tk2"><rect x="1390" y="881" width="22" height="10"/></clipPath>
</defs>
<g stroke="#3e2e08" stroke-width="1" stroke-linejoin="round" paint-order="stroke">
 <!-- up arrow -->
 <path d="M1372.4 883.2L1376.6 878.3L1380.7 883.2z" fill="#fff"/>
 <!-- flag -->
 <rect x="1417.7" y="873.3" width="1.6" height="15.2" fill="#fff"/>
 <path d="M1419.8 874.6C1422 873.8 1424.4 874 1426.4 874.6V876.8C1428.4 876.2 1430.8 876.6 1432.6 877.6C1432.2 879.4 1431.4 881 1430.2 882.2C1428.8 881.8 1427.4 881.8 1426.2 882.2C1424.2 881.6 1422 881.6 1419.8 882.2z" fill="#fff"/>
 <!-- plug -->
 <path d="M1442.7 874.1H1444V877.6H1445.1V874.1H1446.4V877.6H1447.2V881.6H1445.5V888.2H1443.5V881.6H1441.6V877.6H1442.7z" fill="#fff"/>
 <!-- battery -->
 <path d="M1450.2 874.2H1454.4V875.4H1456.6V888.4H1448V875.4H1450.2z" fill="#d8d4c4"/>
 <rect x="1449.4" y="876.8" width="5.8" height="10.4" fill="#8a6e20" stroke="none"/>
 <!-- signal -->
 <rect x="1465.3" y="883.8" width="2.6" height="2.4" fill="#fff"/>
 <rect x="1468.4" y="881.6" width="2.6" height="4.6" fill="#fff"/>
 <rect x="1471.4" y="879.4" width="2.6" height="6.8" fill="#fff"/>
 <rect x="1474.4" y="877.4" width="2.6" height="8.8" fill="#fff"/>
 <rect x="1477.5" y="875.5" width="2.7" height="10.7" fill="#fff"/>
 <!-- speaker -->
 <path d="M1491.7 877.6H1494.2L1498.4 873.4V888.4L1494.2 884H1491.7z" fill="#fff"/>
</g>
<path d="M1449.4 881.2L1456.8 888.4M1456.8 881.2L1449.4 888.4" stroke="#e8202c" stroke-width="1.9"/>
<path d="M1501.4 877.2C1503.6 879.4 1503.6 882.6 1501.4 884.8" fill="none" stroke="#f6f0d8" stroke-width="1" opacity=".85"/>
<!-- small kaspersky -->
<g transform="translate(1394.9 874.9) scale(.405) translate(-1057.3 -864.2)">
 <path d="M1057.3 864.2H1066.4V874.2L1077.1 864.2H1088.9L1057.3 895.8z" fill="#fff" stroke="#fff" stroke-width="4.6" stroke-linejoin="round"/>
 <path d="M1076.2 877.8L1084 885.1L1088.4 881.3V895.3H1074.7L1078.4 890.7L1071.6 883.1z" fill="#fff" stroke="#fff" stroke-width="4.6" stroke-linejoin="round"/>
 <path d="M1057.3 864.2H1066.4V874.2L1077.1 864.2H1088.9L1057.3 895.8z" fill="url(#kpk)" clip-path="url(#kc1)"/>
 <path d="M1057.3 864.2H1066.4V874.2L1077.1 864.2H1088.9L1057.3 895.8z" fill="#e60000" clip-path="url(#kc2)"/>
 <path d="M1076.2 877.8L1084 885.1L1088.4 881.3V895.3H1074.7L1078.4 890.7L1071.6 883.1z" fill="url(#kgr)" clip-path="url(#kc3)"/>
 <path d="M1076.2 877.8L1084 885.1L1088.4 881.3V895.3H1074.7L1078.4 890.7L1071.6 883.1z" fill="#000" clip-path="url(#kc4)"/>
</g>
</svg>

<svg style="left:0;top:0" width="1600" height="260" viewBox="0 0 1600 260">
<defs>
 <linearGradient id="pfb" x1="0" y1="0" x2="1" y2="0"><stop offset="0" stop-color="#f6f6fe"/><stop offset=".7" stop-color="#dcdcf4"/><stop offset="1" stop-color="#c4c4ea"/></linearGradient>
 <linearGradient id="pfs" x1="0" y1="0" x2="1" y2="0"><stop offset="0" stop-color="#f0f0fc"/><stop offset="1" stop-color="#b0b0dc"/></linearGradient>
 <linearGradient id="pfd" x1="0" y1="0" x2="1" y2="1"><stop offset="0" stop-color="#b8b8b8"/><stop offset=".35" stop-color="#f4f4f4"/><stop offset=".6" stop-color="#c0c0c0"/><stop offset="1" stop-color="#f0f0f0"/></linearGradient>
 <linearGradient id="dpi" x1="0" y1="0" x2=".3" y2="1"><stop offset="0" stop-color="#4878b8"/><stop offset=".45" stop-color="#4a9090"/><stop offset="1" stop-color="#62b078"/></linearGradient>
 <linearGradient id="dpv" x1="0" y1="0" x2="0" y2="1"><stop offset="0" stop-color="#2c50a4"/><stop offset="1" stop-color="#5cb45c"/></linearGradient>
 <radialGradient id="dpc" cx=".4" cy=".3" r=".8"><stop offset="0" stop-color="#78d468"/><stop offset=".6" stop-color="#34b82c"/><stop offset="1" stop-color="#1e9418"/></radialGradient>
 <linearGradient id="shb" x1="0" y1="0" x2="1" y2="1"><stop offset="0" stop-color="#3c98ec"/><stop offset="1" stop-color="#1060cc"/></linearGradient>
 <linearGradient id="shy" x1="0" y1="0" x2="1" y2="1"><stop offset="0" stop-color="#ffe84a"/><stop offset="1" stop-color="#f4be14"/></linearGradient>
 </defs>
<!-- title + address icons -->
<g transform="translate(2 3.4)">
  <path d="M2.6 2.2L3.2 .6H13.2L14 2.2z" fill="#9c9cd4"/>
  <rect x="2.6" y="2.2" width="11.4" height="12.6" fill="#e6e6f8" stroke="#9c9cd4" stroke-width=".8"/>
  <rect x="4" y="3.4" width="8.6" height="1.6" fill="#fff"/>
  <path d="M7 4.6H11.6V7.6H7z" fill="#f0b830"/><path d="M4 4.4H7.4V6.2H4z" fill="#5ca078"/>
  <path d="M9 9L12.8 8V14.4H8z" fill="#4c9060"/>
  <rect x=".6" y="5.4" width="9.6" height="9.4" fill="#d0d0d4" stroke="#8888a0" stroke-width=".5"/>
  <rect x=".4" y="5.2" width="1.3" height="9.8" fill="#101010"/>
  <circle cx="5.8" cy="10.2" r="3.7" fill="url(#pfd)"/><circle cx="5.8" cy="10.2" r="1" fill="#fff" stroke="#909090" stroke-width=".4"/>
  <rect x="2.2" y="8.6" width="1.2" height="1.2" fill="#60e040"/>
</g>
<g transform="translate(111 32.4)">
  <path d="M2.6 2.2L3.2 .6H13.2L14 2.2z" fill="#9c9cd4"/>
  <rect x="2.6" y="2.2" width="11.4" height="12.6" fill="#e6e6f8" stroke="#9c9cd4" stroke-width=".8"/>
  <rect x="4" y="3.4" width="8.6" height="1.6" fill="#fff"/>
  <path d="M7 4.6H11.6V7.6H7z" fill="#f0b830"/><path d="M4 4.4H7.4V6.2H4z" fill="#5ca078"/>
  <path d="M9 9L12.8 8V14.4H8z" fill="#4c9060"/>
  <rect x=".6" y="5.4" width="9.6" height="9.4" fill="#d0d0d4" stroke="#8888a0" stroke-width=".5"/>
  <rect x=".4" y="5.2" width="1.3" height="9.8" fill="#101010"/>
  <circle cx="5.8" cy="10.2" r="3.7" fill="url(#pfd)"/><circle cx="5.8" cy="10.2" r="1" fill="#fff" stroke="#909090" stroke-width=".4"/>
  <rect x="2.2" y="8.6" width="1.2" height="1.2" fill="#60e040"/>
</g>
<!-- programs & features 32px -->
<g>
 <path d="M244.6 104.6L250 108.2L245 112z" fill="#b8c4d0" opacity=".5"/>
 <path d="M229 83.4H244.6L246 87.4L242 90.6H229.4z" fill="#b4b4e0" stroke="#8c8cc4" stroke-width=".7"/>
 <path d="M229.6 85.4H243.4L241.6 89H229.6z" fill="#f0f0fc"/>
 <path d="M224.2 85.4L229.2 85V90.4H241.4L245.6 87.2V110.4L241.2 112.8H224.2z" fill="url(#pfb)" stroke="#9898cc" stroke-width=".8"/>
 <path d="M241.2 90.6L245.6 87.2V110.4L241.2 112.8z" fill="url(#pfs)" stroke="#8c8cc4" stroke-width=".7"/>
 <path d="M224.4 85.6H229.2V90.4H224.4z" fill="#c0c0e6"/>
 <rect x="240" y="91" width="1.2" height="21.4" fill="#fff"/>
 <path d="M227 93.6C229 91.4 231.6 90.8 232.4 91.4L232.6 95L227 95.4z" fill="#84b898"/>
 <path d="M232 93.8C234.6 92.4 238 93.2 238.8 95.4C239.4 98 238.6 100.6 237 101.4L232 96z" fill="#f0b040"/>
 <path d="M237.2 104L240 101.6V112.4L233 112.2z" fill="#4e9a62"/>
 <rect x="221.2" y="93.2" width="16" height="19.6" fill="#dcdce0" stroke="#9a9aa8" stroke-width=".5" opacity=".95"/>
 <rect x="221" y="93" width="2" height="16.8" fill="#161616"/>
 <circle cx="229.6" cy="103" r="6.8" fill="url(#pfd)" stroke="#b0b0b4" stroke-width=".4"/>
 <circle cx="229.6" cy="103" r="1.9" fill="#fff" stroke="#a8b8b0" stroke-width=".5"/><circle cx="229.6" cy="103" r=".7" fill="#8ab0a0"/>
 <path d="M223.6 99.4L226.4 100.6L225.8 101.8L223.2 100.4z" fill="#60e030"/>
 <path d="M233 104.8L235.8 106.6L235.2 107.6L232.6 105.8z" fill="#f0e060"/>
</g>
<!-- default programs 32px -->
<g>
 <rect x="219.6" y="183.6" width="29" height="24" rx="1.6" fill="#fff" stroke="#787e8a" stroke-width="1.1"/>
 <rect x="220.4" y="184.4" width="27.4" height="1.8" fill="#dfe6ee"/>
 <rect x="242" y="184.2" width=".8" height=".9" fill="#2c50a4"/><rect x="243.9" y="184.2" width=".8" height=".9" fill="#2c50a4"/><rect x="245.8" y="184.2" width=".8" height=".9" fill="#2c50a4"/>
 <rect x="222.4" y="188.4" width="11.4" height="15.4" fill="url(#dpi)" stroke="#c8c4e4" stroke-width=".8"/>
 <path d="M223 193.6C226 191.6 230 191 233.4 191.2V188.8H223z" fill="#fff" opacity=".18"/>
 <g stroke="#c4c4c4" stroke-width=".8"><path d="M236 188.5H242M236 190.5H242M236 192.5H242M236 194.5H242M236 196.5H242M236 198.5H240M236 201.2H238"/></g>
 <rect x="244" y="188" width="2" height="8.8" fill="url(#dpv)"/>
 <circle cx="244" cy="204.9" r="7" fill="url(#dpc)" stroke="#2a9c24" stroke-width=".5"/>
 <path d="M240.4 205L242.8 207.6L247 201.6" fill="none" stroke="#fff" stroke-width="1.9"/>
</g>
<!-- shield -->
<g>
 <path d="M433 100.3C431 101.8 428.6 102.4 426.6 102.4C426.2 108 428.4 112.4 433 114.6C437.6 112.4 439.8 108 439.4 102.4C437.4 102.4 435 101.8 433 100.3Z" fill="#f4f4f4" stroke="#909090" stroke-width=".9"/>
 <path d="M432.8 102.2C431.2 103.2 429.6 103.6 428.2 103.7C428.1 105.2 428.2 106.6 428.5 107.9H432.8z" fill="url(#shb)"/>
 <path d="M433.2 102.2C434.8 103.2 436.4 103.6 437.8 103.7C437.9 105.2 437.8 106.6 437.5 107.9H433.2z" fill="url(#shy)"/>
 <path d="M428.6 108.3H432.8V113C430.6 111.8 429.2 110.2 428.6 108.3z" fill="url(#shy)"/>
 <path d="M433.2 108.3H437.4C436.8 110.2 435.4 111.8 433.2 113z" fill="url(#shb)"/>
</g>
</svg>

</body></html>
